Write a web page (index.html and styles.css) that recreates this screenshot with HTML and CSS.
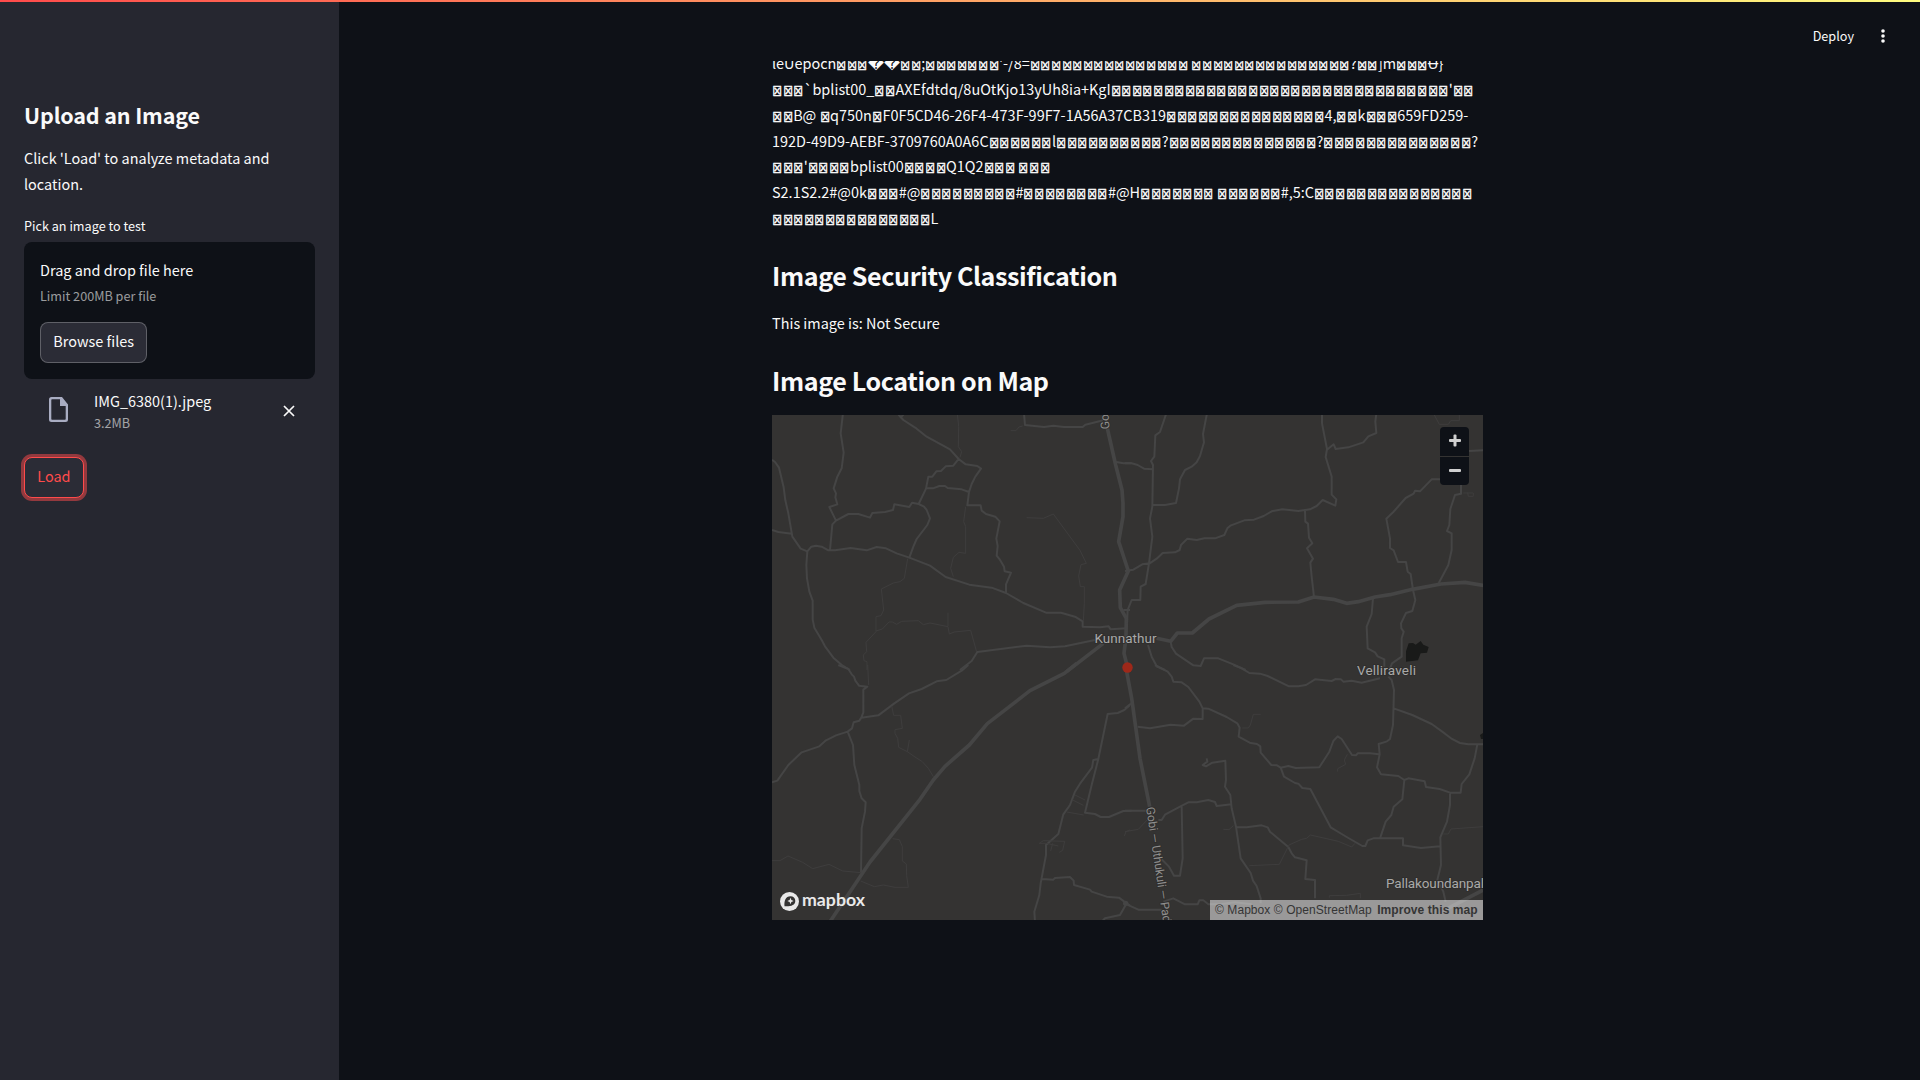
FILE: index.html
```html
<!DOCTYPE html>
<html lang="en">
<head>
<meta charset="utf-8">
<title>Image metadata</title>
<link rel="stylesheet" href="styles.css">
</head>
<body>
<div class="stripe"></div>
<div class="app">
  <aside class="sidebar">
    <h2 class="side-title">Upload an Image</h2>
    <p class="side-text">Click 'Load' to analyze metadata and location.</p>
    <div class="label">Pick an image to test</div>
    <section class="dropzone">
      <div>Drag and drop file here</div>
      <small class="muted">Limit 200MB per file</small>
      <button class="btn">Browse files</button>
    </section>
    <div class="file">
      <svg class="file-icon" width="19" height="25" viewBox="0 0 19 25"><path fill="#a9adc2" fill-rule="evenodd" d="M2.5 0H13L19 7.500V22.500A2.500 2.500 0 0 1 16.500 25H2.500A2.500 2.500 0 0 1 0 22.500V2.500A2.500 2.500 0 0 1 2.500 0ZM3 2.300Q2.300 2.300 2.300 3V22Q2.300 22.700 3 22.700H16Q16.700 22.700 16.700 22V9H11V2.300Z"/></svg>
      <div class="file-info"><div>IMG_6380(1).jpeg</div><small class="muted">3.2MB</small></div>
      <svg class="close" width="12" height="12" viewBox="0 0 12 12"><path d="M1 1L11 11M11 1L1 11" stroke="#fafafa" stroke-width="1.700"/></svg>
    </div>
    <button class="btn btn-load">Load</button>
  </aside>
  <div class="page">
    <header class="toolbar">
      <span>Deploy</span>
      <svg width="4" height="14" viewBox="0 0 4 14" fill="#fafafa"><circle cx="2" cy="2" r="1.800"/><circle cx="2" cy="7" r="1.800"/><circle cx="2" cy="12" r="1.800"/></svg>
    </header>
    <main class="main">
      <div class="content">
        <div class="dump" id="dump"></div>
        <h2 class="heading">Image Security Classification</h2>
        <p class="result">This image is: Not Secure</p>
        <h2 class="heading">Image Location on Map</h2>
        <div class="map">
          <svg class="tiles" width="711" height="505" viewBox="0 0 711 505">
            <g class="roads" transform="translate(-2 -5) scale(.33333)">
              <path d="M220 0L212 70L221 128L215 175L202 200L191 235L198 250L196 262L202 283L178 291L198 332L187 343L180 420M198 332L235 312H265L300 323L307 309L345 306L369 300L373 283L418 291L426 278L446 282L468 236L475 200L487 200L499 184L513 183L527 169L550 167L566 147M382 10L400 30L440 56L470 80L540 118L566 147L587 163L622 168L633 176L616 200L605 222L597 246L592 286H632L635 302L648 312L676 320L689 334L679 386L683 408L680 437L689 448L702 470L704 484L723 488L708 523V549M470 234L489 235L508 228H525L533 234L575 238L597 246M446 282L462 290L470 300L480 325L472 345L440 387L430 410L418 443M390 24L402 12"/>
              <path d="M6 149L15 156L27 173L41 232L46 271L55 310L67 380L92 416L112 424M6 360L25 366L65 371M112 424L124 410L138 407L155 410L175 421H195L242 414L290 421L320 411L348 415L380 430L418 443L480 467L527 501L598 524L665 533L708 549L760 579L828 608H873L915 620L938 634V650L990 652L1016 649L1022 658L1070 655M112 424L109 465L111 505L118 545L128 572V628L133 653L155 690L165 709L190 743L218 767L240 780M762 10L765 45L822 51L850 47L882 51H938L946 44L1000 31M1035 155L1060 160H1085M570 780L605 753L622 726L770 707L840 712L885 709L975 690M1060 600L1080 600"/>
              <path class="minor" d="M562 10L566 50L565 110L575 125L570 142M587 290L581 335L587 350V430L567 427L550 442L542 475L550 500M413 446L403 505L390 515L370 519L334 537L341 600L333 617L318 620V665L288 697L290 725L280 735L282 752L291 755V780M318 663L337 657L357 636H367L380 643L395 634L445 632L460 644L480 639L534 650L538 672L553 666L602 661L620 726M534 608V648M770 323L820 325L850 312L930 421L949 460L933 464L926 498L931 530H943V580L940 632M722 62H738L747 51L758 48"/>
              <path class="major" d="M1012 55L1020 90L1037 165L1056 240L1059 280V320L1046 395L1075 483L1049 540L1051 593L1069 625L1068 680L1062 730L1072 770"/>
              <path class="major" d="M1000 700L890 785"/>
            </g>
            <g class="roads" transform="translate(353 -5) scale(.33333)">
              <path d="M124 10L105 66L91 76L88 140L78 153L84 165L82 290L75 325L82 380L72 460L62 522L47 530L46 570H20L8 600L6 640M0 160H20L38 165L57 176L84 178M246 10L234 72L237 97L225 138L215 157L200 170L180 180L165 208L162 235L153 279L120 285H84M0 483L25 479L52 463L74 460L95 446L113 429L150 427L164 420L168 405L187 386L215 390L238 385H270L298 375L307 355L316 347L358 331L387 329L416 318L440 304L472 298L520 303L555 298L575 288L593 270L631 287L634 268L620 254V200L602 141L606 117L591 40V10M606 119L626 103L632 117L670 112L715 97L730 79L754 69L751 35L754 10M540 303L541 335L549 341L552 383L562 400L546 415L564 446L556 458L560 500L567 561M945 208H920L885 244L870 242L866 251L842 264L805 306L784 326L795 385V414L806 421L819 456H843L848 485L857 492L864 540L871 570L862 603L843 609L828 640L829 655L836 665L830 685V740L801 760L795 775M1008 225V251L990 255L976 297L973 345L966 363L980 370V420L970 465L941 520M1032 123L1075 121M744 565L740 612L725 650L728 715L750 727L758 739L778 748V770M137 695L140 711L153 731L205 766L227 768L237 745H280L325 763L362 780M69 705L80 740L96 770L120 780"/>
              <path class="minor" d="M928 15L943 43H970L977 32H1003V12M1015 249H1045V259H1030L1028 248M1031 130V160"/>
              <path class="major" d="M95 685L137 694L157 669H202L252 627L335 586L420 577L520 576L567 561L625 568L665 580L700 575L750 561L795 554L862 538L948 522L1020 517L1080 527"/>
              <path class="water" d="M843 755V724L851 700L864 699L872 704L887 693L895 704L911 711L906 728L887 730L879 751Z"/>
            </g>
            <g class="roads" transform="translate(-2 250) scale(.33333)">
              <path d="M205 0L235 12L245 28L252 35L256 47L267 62L292 65L280 74V142L274 158L325 151L373 115L417 85L455 72L500 49L529 45L575 17L595 0M274 158L268 167L251 172L246 190L233 200L198 211L168 226L148 244L95 262L55 300L22 347L6 352M233 200L249 240L253 300L268 360V378L275 400L287 412L285 440L275 490L273 625M1080 120L1063 135L1043 144L1013 147L985 282L970 285L966 308L930 356L915 380L900 420L880 448L865 507L828 540V570L812 655L808 690L793 740L795 770M985 282L965 360L945 443L975 447L992 456H1017L1060 438L1085 437M817 642L850 644L855 639L900 636L911 647L912 660L960 674L965 680L1010 695L1047 698L1070 715L1080 722M1070 715L1050 750L1005 760L995 770"/>
              <path class="minor" d="M293 0L296 60M365 123L371 151H392L397 190L375 194V205L383 220L386 247L412 260L435 276L457 290L475 310L490 335M412 260L418 225M6 587H30L54 573L98 592L128 611L177 598L218 618L273 623M368 521L388 524L397 545V588L409 597L410 632L415 667H375L340 660L313 665L272 648M915 390L945 405M908 405L940 421M890 441L941 450M808 535L820 527L884 529L878 556L868 562M808 535H830L865 543M848 535L842 558M1063 513L1068 500L1080 495"/>
              <path class="major" d="M920 -5L883 25L780 77L652 176L598 240L525 304L490 345L450 403L300 591L180 770"/>
            </g>
            <g class="roads" transform="translate(353 250) scale(.33333)">
              <path d="M90 0L128 20L140 35L145 50L170 52L190 66L223 110L233 130V162L205 161L177 182L137 179L75 190L38 185M0 130L25 110M233 130L250 131L305 156L337 175L344 188L341 215L374 233L396 237L406 244L407 263L439 300L456 301L467 308L490 303L512 309L583 307L613 260L625 228L638 214L650 222L681 270L693 271L698 265H735L762 268M325 0L350 10L373 24L405 26L428 33L492 64H520L543 60L570 43L620 48L632 42L648 43L655 50L680 47L710 53L765 40M467 308L477 335L510 354L520 356L532 369L556 372L617 487L665 516L712 543H721L728 526L745 520H834V541L888 549L945 544M790 35L800 45L807 75L804 180L795 222L786 229L761 237L764 268L756 307L768 328L820 333L838 345L832 403L806 425L799 450L782 470L765 520M806 130L862 150L920 177L960 206L978 220L1005 234L1030 238H1080M1057 238L1049 280L1033 328L1010 357L1007 383H975L944 372L903 366L899 349L850 340L838 345M975 386V420L966 470L946 517L948 600L937 645L955 680L962 710M245 280L247 290L233 300L243 304L262 293L301 287L303 345L300 365L316 390L320 430L333 485L347 580L377 624L384 647L395 663L407 700V715M320 418L275 423L270 411L250 405L215 412H190L165 425L120 449L110 465H100M170 425L173 580L165 632H147L132 605L110 583M333 486L365 487L410 481L428 487L435 500L490 546L500 565L510 577L545 586L541 642L570 645V700M0 437H75M115 710L145 700L180 718H218L223 706H235L250 718H285L330 712L380 718M0 716L40 734H110"/>
              <path class="minor" d="M352 189H370L376 180L385 148H407M667 268L658 285L662 298L638 311V320M0 500L40 493L68 463M295 493L312 494L325 482M373 602L463 598L492 540L530 523L545 520L556 510L640 529L680 546L690 535M613 698V692L665 691L706 685V700M955 507H970L978 492L1075 485"/>
              <path class="major" d="M5 20L20 100L45 280L74 425"/>
              <path class="major" d="M960 735L1075 675"/>
              <path class="water" d="M1080 200L1065 210L1068 222L1080 222Z"/>
              <circle class="junction" cx="2" cy="715" r="8"/>
            </g>
            <g class="places">
              <text x="322.500" y="228.300" textLength="62">Kunnathur</text>
              <text x="585" y="260.300" textLength="59">Velliraveli</text>
              <text x="614" y="473.300" textLength="98">Pallakoundanpal</text>
              <text class="road-name" transform="translate(337.500 14) rotate(-94)">Gobi</text>
              <text class="road-name" transform="translate(374 392.500) rotate(81.500)" textLength="123">Gobi — Uthukuli — Pada</text>
            </g>
            <circle cx="355.500" cy="252.500" r="5.200" fill="#9e2819"/>
            <g transform="translate(8 477)">
              <circle cx="9.500" cy="9.500" r="9.500" fill="#e9e9e9"/>
              <path d="M4.500 14.200C4 9 5.500 4.200 10.500 4.200A4.700 4.700 0 0 1 15.300 9C15.300 13.500 10 14.700 4.500 14.200Z" fill="#343332"/>
              <path d="M10.500 5.800L11.400 8.100L13.700 9L11.400 9.900L10.500 12.200L9.600 9.900L7.300 9L9.600 8.100Z" fill="#e9e9e9"/>
              <text class="brand" x="22" y="14" textLength="63" lengthAdjust="spacingAndGlyphs">mapbox</text>
            </g>
          </svg>
          <div class="zoom"><span class="plus"></span><span class="minus"></span></div>
          <div class="credit">© Mapbox © OpenStreetMap <b>Improve this map</b></div>
        </div>
      </div>
    </main>
  </div>
</div>
<script src="dump.js"></script>
</body>
</html>
```
FILE: styles.css
```css
* { box-sizing: border-box; }
body {
  margin: 0;
  background: #0e1117;
  color: #fafafa;
  font: 14.45px/25.6px "Noto Sans CJK SC", "Noto Sans", sans-serif;
  overflow: hidden;
}
h2, p { margin: 0; }
small { display: block; font-size: 12.65px; line-height: 22.4px; }
.muted { color: rgba(250, 250, 250, .6); }
.stripe {
  position: absolute;
  top: 0; left: 0; right: 0;
  height: 2px;
  background: linear-gradient(90deg, #ff4b4b, #fffd80);
}
.app { display: flex; height: 1080px; }
.sidebar {
  width: 339px;
  flex: none;
  padding: 101px 24px 0;
  background: #262730;
}
.side-title {
  font-size: 21.5px;
  line-height: 28.8px;
  font-weight: 700;
  letter-spacing: -.15px;
  margin-bottom: 15.500px;
}
.side-text { margin-bottom: 18.500px; }
.label { font-size: 12.65px; line-height: 22.4px; margin-bottom: 4.600px; }
.dropzone {
  height: 137px;
  padding: 15.200px 16px;
  border-radius: 8px;
  background: #0e1117;
}
.dropzone small { margin: 2.300px 0 14.500px; }
.btn {
  display: block;
  height: 41px;
  padding: 0 12.300px 3px;
  border: 1px solid rgba(250, 250, 250, .25);
  border-radius: 8px;
  background: #2b2c36;
  color: inherit;
  font: inherit;
}
.btn-load {
  border-color: #ff4b4b;
  color: #ff4b4b;
  box-shadow: 0 0 0 3px rgba(255, 75, 75, .5);
}
.file { display: flex; padding: 9px 20px 0 25px; height: 78px; }
.file-icon { margin-top: 9px; }
.file-info { flex: 1; padding-left: 26px; }
.file-info small { margin-top: -2px; }
.close { margin-top: 17px; }
.page { flex: 1; display: flex; flex-direction: column; }
.toolbar {
  height: 61px;
  flex: none;
  display: flex;
  justify-content: flex-end;
  align-items: center;
  gap: 27px;
  padding: 11px 35px 0 0;
  font-size: 12.65px;
}
.main { flex: 1; overflow: hidden; }
.content { width: 711px; margin: -10.600px auto 0; position: relative; left: -2px; }
.dump { white-space: pre; margin-bottom: 28.700px; }
.line { height: 25.75px; }
.box {
  display: inline-block;
  width: 10.57px;
  height: 15px;
  line-height: 15px;
  text-align: center;
  font-family: "DejaVu Sans", sans-serif;
  font-size: 11.500px;
  font-style: normal;
  transform: scale(.92, 1.22);
  -webkit-text-stroke: .5px #fafafa;
}
.replacement { font-family: "DejaVu Sans", sans-serif; font-size: 15.6px; line-height: 1; }
.heading { font-size: 25.07px; line-height: 33.6px; font-weight: 700; letter-spacing: -.37px; }
.result { margin: 17px 0 28.400px; }
.map { position: relative; margin-top: 17.400px; height: 505px; background: #343332; overflow: hidden; }
.tiles { display: block; }
.roads { fill: none; stroke: #454545; stroke-width: 6; stroke-linejoin: round; }
.roads .minor { stroke: #3e3d3d; stroke-width: 3; }
.roads .major { stroke-width: 11; }
.roads .water { fill: #191a19; stroke: none; }
.roads .junction { fill: #454545; stroke: none; }
.places { font: 13.500px Roboto, sans-serif; fill: #a9a9a8; stroke: #2e2d2c; stroke-width: 1.500px; }
.places text { paint-order: stroke; }
.places .road-name { font-size: 12px; fill: #8e8e8d; }
.brand { font: 700 17px Lato, sans-serif; fill: #e9e9e9; }
.zoom {
  position: absolute;
  top: 12px; right: 14px;
  width: 29px;
  border-radius: 4px;
  background: #0e1117;
}
.zoom span { position: relative; display: block; height: 28px; }
.zoom .plus { height: 30px; border-bottom: 1px solid #343332; }
.zoom span::before, .zoom .plus::after {
  content: "";
  position: absolute;
  left: 8.500px; top: 12.500px;
  width: 12px; height: 3px;
  border-radius: 1px;
  background: #d0d0d0;
}
.zoom .plus::after { transform: rotate(90deg); }
.credit {
  position: absolute;
  right: 0; bottom: 0;
  width: 273px; height: 20px;
  padding-left: 5px;
  background: rgba(255, 255, 255, .5);
  color: #353535;
  font: 12px/20px "Liberation Sans", sans-serif;
  letter-spacing: .07px;
  white-space: nowrap;
}
.credit b { margin-left: 2px; }
```
FILE: dump.js
```js
// Raw metadata lines; {n} stands for n unprintable characters.
const lines = [
  "leUepoch{3}\uFFFD\uFFFD{2};{7}'-/8={15} {15}?{2}]m{3}\u0244}",
  "{3}`bplist00_{2}AXEfdtdq/8uOtKjo13yUh8ia+KgI{32}'{2}",
  "{2}B@ {1}q750n{1}F0F5CD46-26F4-473F-99F7-1A56A37CB319{15}4,{2}k{3}659FD259-",
  "192D-49D9-AEBF-3709760A0A6C{6}l{10}?{14}?{14}?",
  "{3}'{4}bplist00{4}Q1Q2{3} {3}",
  "S2.1S2.2#@0k{3}#@{9}#{8}#@H{7} {6}#,5:C{15}",
  "{15}L"
];
document.getElementById("dump").innerHTML = lines
  .map(l => "<div class=\"line\">" + l
    .replace(/\{(\d+)\}/g, (m, n) => "<i class=\"box\">☒</i>".repeat(+n))
    .replace(/\uFFFD+/g, m => "<span class=\"replacement\">" + m + "</span>") + "</div>")
  .join("");
```
